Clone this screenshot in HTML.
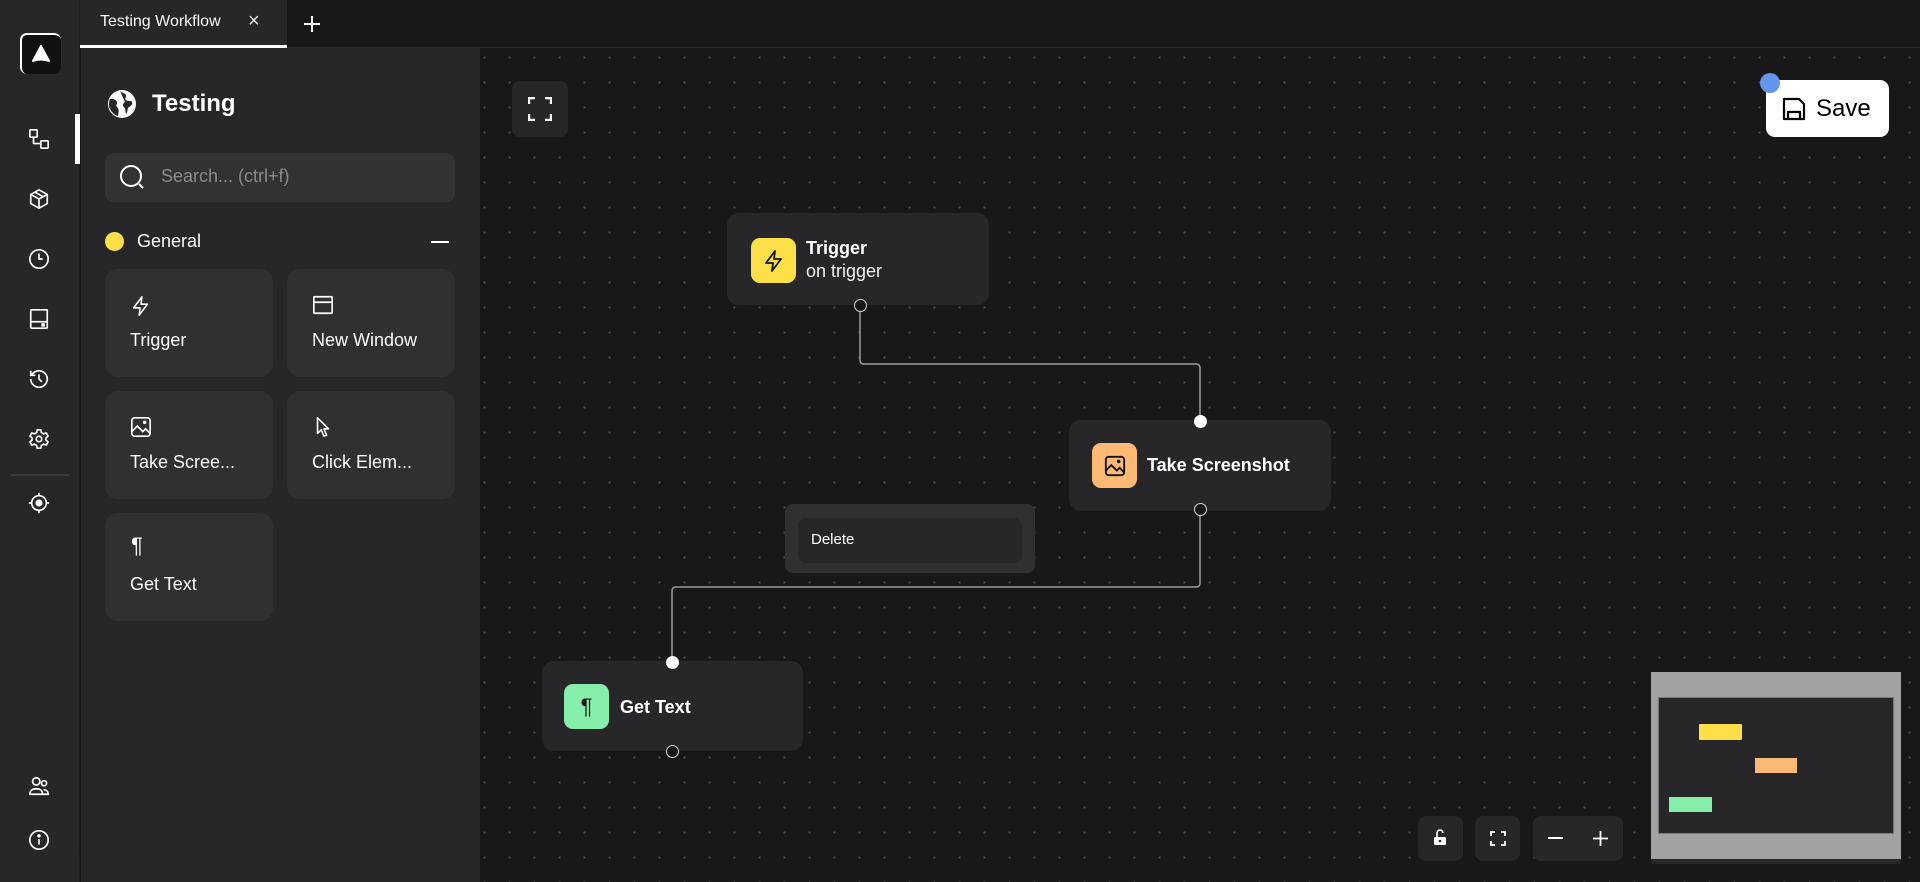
<!DOCTYPE html>
<html><head><meta charset="utf-8"><style>
*{margin:0;padding:0;box-sizing:border-box}
body{width:1920px;height:882px;overflow:hidden;background:#18181b;font-family:"Liberation Sans",sans-serif;color:#fff;position:relative}
.abs{position:absolute}
#canvas{left:480px;top:48px;width:1440px;height:834px;background-color:#18181b;background-image:radial-gradient(circle,#4a4a50 1px,transparent 1.3px);background-size:25px 25px;background-position:-8px -3px}
#iconbar{left:0;top:0;width:80px;height:882px;background:#27272a;border-right:1px solid #1f1f22}
#panel{left:81px;top:48px;width:399px;height:834px;background:#27272a}
.ic{position:absolute;left:28px;width:22px;height:22px}
.card{position:absolute;width:168px;height:108px;background:#303033;border-radius:13px}
.card .t{position:absolute;left:25px;font-size:18px;color:#fafafa}
.card svg{position:absolute;left:25px}
.node{position:absolute;background:#27272a;border-radius:12px}
.nic{position:absolute;width:45px;height:45px;border-radius:9px;display:flex;align-items:center;justify-content:center}
.h{position:absolute;width:13px;height:13px;border-radius:50%;margin:-6.5px 0 0 -6.5px}
.hw{background:#fff}
.hd{background:#18181b;border:1.5px solid #d4d4d8}
.btn{position:absolute;background:#27272a;border-radius:8px}
</style></head><body>
<div class="abs" id="canvas"></div>
<div class="abs" style="left:80px;top:0;width:1840px;height:48px;background:#18181b;border-bottom:1px solid #2c2c30"></div>
<div class="abs" style="left:80px;top:0;width:207px;height:48px;background:#27272a"></div>
<div class="abs" style="left:80px;top:45px;width:207px;height:3px;background:#fff"></div>
<div class="abs" style="left:100px;top:13px;font-size:16px;color:#fafafa">Testing Workflow</div>
<div class="abs" style="left:248px;top:10px;font-size:20px;color:#e4e4e7">×</div>
<svg class="abs" style="left:303px;top:15px" width="18" height="18" viewBox="0 0 18 18"><path d="M9 1v16M1 9h16" stroke="#fff" stroke-width="2"/></svg>

<div class="abs" id="iconbar"></div>
<div class="abs" style="left:79px;top:48px;width:1px;height:805px;background:#1c1c1f"></div>
<div class="abs" style="left:20px;top:33px;width:41px;height:41px;background:#111113;border-radius:7px;border-top:2px solid #fff;border-left:2px solid #fff"></div>
<svg class="abs" style="left:31px;top:44px" width="20" height="20" viewBox="0 0 20 20"><path d="M10 2 L18 17 Q10 14 2 17 Z" fill="#fff" stroke="#fff" stroke-linejoin="round" stroke-width="2"/></svg>
<div class="abs" style="left:75px;top:114px;width:5px;height:50px;background:#fff"></div>
<svg class="ic" style="top:128px" viewBox="0 0 24 24" fill="none" stroke="#fff" stroke-width="1.8"><rect x="2" y="2" width="8" height="8" rx="1"/><rect x="14" y="14" width="8" height="8" rx="1"/><path d="M6 10v6a1 1 0 0 0 1 1h7"/></svg>
<svg class="ic" style="top:188px" viewBox="0 0 24 24" fill="none" stroke="#fff" stroke-width="1.8" stroke-linejoin="round"><path d="M12 2 21 7v10l-9 5-9-5V7z"/><path d="M3 7l9 5 9-5M12 12v10M7.5 4.5l9 5"/></svg>
<svg class="ic" style="top:248px" viewBox="0 0 24 24" fill="none" stroke="#fff" stroke-width="1.8"><circle cx="12" cy="12" r="10"/><path d="M12 6v6h4"/></svg>
<svg class="ic" style="top:308px" viewBox="0 0 24 24" fill="none" stroke="#fff" stroke-width="1.8"><rect x="3" y="2" width="18" height="20" rx="1"/><path d="M3 15h18"/><rect x="15.5" y="17.5" width="2" height="2" fill="#fff"/></svg>
<svg class="ic" style="top:368px" viewBox="0 0 24 24" fill="none" stroke="#fff" stroke-width="1.8"><path d="M3 12a9 9 0 1 0 3-6.7L3 8M3 3v5h5"/><path d="M12 7v5l3 3"/></svg>
<svg class="ic" style="top:428px" viewBox="0 0 24 24" fill="none" stroke="#fff" stroke-width="1.8" stroke-linejoin="round"><path d="M10 2h4l.6 3 2.4 1.4 2.9-1 2 3.4-2.3 2v2.4l2.3 2-2 3.4-2.9-1L14.6 19 14 22h-4l-.6-3L7 17.6l-2.9 1-2-3.4 2.3-2v-2.4l-2.3-2 2-3.4 2.9 1L9.4 5z"/><circle cx="12" cy="12" r="3"/></svg>
<div class="abs" style="left:11px;top:474px;width:58px;height:2px;background:#3a3a3e"></div>
<svg class="ic" style="top:492px" viewBox="0 0 24 24" fill="none" stroke="#fff" stroke-width="1.8"><circle cx="12" cy="12" r="8"/><circle cx="12" cy="12" r="3" fill="#fff"/><path d="M12 1v3M12 20v3M1 12h3M20 12h3"/></svg>
<svg class="ic" style="top:775px" viewBox="0 0 24 24" fill="none" stroke="#fff" stroke-width="1.8"><circle cx="9" cy="7" r="4"/><path d="M2 21c0-4 3-6 7-6s7 2 7 6z"/><circle cx="17.5" cy="9" r="2.8"/><path d="M16 21h6c0-3-2-5-5-5"/></svg>
<svg class="ic" style="top:829px" viewBox="0 0 24 24" fill="none" stroke="#fff" stroke-width="1.8"><circle cx="12" cy="12" r="10"/><path d="M12 11v6"/><circle cx="12" cy="7.5" r="1" fill="#fff"/></svg>

<div class="abs" id="panel"></div>
<svg class="abs" style="left:107px;top:89px" width="30" height="30" viewBox="0 0 30 30"><circle cx="15" cy="15" r="14" fill="#fff"/><path d="M3 10c3-1 6 1 7 3s-2 3 0 5 2 4 1 9c-4-1-8-5-9-10 0-2 0-5 1-7z" fill="#27272a"/><path d="M13 2c2 2 5 2 6 4s-2 3 0 5 5 0 6 2-1 4-3 5-1 5-3 7c-1-3 0-5-2-7-2-1-1-4 1-5" fill="#27272a"/></svg>
<div class="abs" style="left:152px;top:90px;font-size:24px;font-weight:bold">Testing</div>
<div class="abs" style="left:105px;top:153px;width:350px;height:49px;background:#323235;border-radius:9px"></div>
<svg class="abs" style="left:119px;top:164px" width="28" height="28" viewBox="0 0 28 28" fill="none" stroke="#fff" stroke-width="2"><circle cx="12" cy="12" r="10"/><path d="M20 20l4 4"/></svg>
<div class="abs" style="left:161px;top:166px;font-size:18px;color:#8a8a90">Search... (ctrl+f)</div>
<div class="abs" style="left:105px;top:232px;width:19px;height:19px;border-radius:50%;background:#fde047"></div>
<div class="abs" style="left:137px;top:231px;font-size:18px;color:#fafafa">General</div>
<div class="abs" style="left:431px;top:241px;width:18px;height:2px;background:#fff"></div>

<div class="card" style="left:105px;top:269px"><svg style="top:25px" width="22" height="24" viewBox="0 0 24 24" fill="none" stroke="#fff" stroke-width="1.7" stroke-linejoin="round"><path d="M13 2 4 14h7l-1 8 9-12h-7z"/></svg><div class="t" style="top:61px">Trigger</div></div>
<div class="card" style="left:287px;top:269px"><svg style="top:25px" width="22" height="22" viewBox="0 0 24 24" fill="none" stroke="#fff" stroke-width="1.8"><rect x="2" y="3" width="20" height="18" rx="1"/><path d="M2 9h20"/></svg><div class="t" style="top:61px">New Window</div></div>
<div class="card" style="left:105px;top:391px"><svg style="top:25px" width="22" height="22" viewBox="0 0 24 24" fill="none" stroke="#fff" stroke-width="1.8"><rect x="2" y="2" width="20" height="20" rx="3"/><path d="M2 17l6-6 6 6 3-3 5 5"/><circle cx="16" cy="7" r="1" fill="#fff"/></svg><div class="t" style="top:61px">Take Scree...</div></div>
<div class="card" style="left:287px;top:391px"><svg style="top:25px" width="22" height="22" viewBox="0 0 24 24" fill="none" stroke="#fff" stroke-width="1.7" stroke-linejoin="round"><path d="M6 2v17l4-4 3 7 3-1-3-7h5z"/></svg><div class="t" style="top:61px">Click Elem...</div></div>
<div class="card" style="left:105px;top:513px"><div style="position:absolute;left:26px;top:20px;font-size:22px">¶</div><div class="t" style="top:61px">Get Text</div></div>

<div class="btn" style="left:512px;top:81px;width:56px;height:56px"></div>
<svg class="abs" style="left:528px;top:97px" width="24" height="24" viewBox="0 0 24 24" fill="none" stroke="#fff" stroke-width="2.4"><path d="M1 7V1h6M17 1h6v6M23 17v6h-6M7 23H1v-6"/></svg>

<div class="abs" style="left:1766px;top:80px;width:123px;height:57px;background:#fff;border-radius:9px"></div>
<svg class="abs" style="left:1782px;top:97px" width="24" height="24" viewBox="0 0 24 24" fill="none" stroke="#000" stroke-width="2.2" stroke-linejoin="round"><path d="M2 2h15l5 5v15H2z"/><path d="M6 22v-7h12v7"/></svg>
<div class="abs" style="left:1816px;top:95px;font-size:24px;color:#000">Save</div>
<div class="abs" style="left:1760px;top:73px;width:20px;height:20px;border-radius:50%;background:#6495ed"></div>

<svg class="abs" style="left:0;top:0" width="1920" height="882"><g fill="none" stroke="#9a9aa0" stroke-width="1.5"><path d="M860 305V360q0 4 4 4H1196q4 0 4 4V421"/><path d="M1200 509V583q0 4-4 4H676q-4 0-4 4V662"/></g></svg>

<div class="node" style="left:727px;top:213px;width:262px;height:92px"></div>
<div class="nic" style="left:751px;top:238px;background:#fde047"><svg width="24" height="26" viewBox="0 0 24 24" fill="none" stroke="#111" stroke-width="1.8" stroke-linejoin="round"><path d="M13 2 4 14h7l-1 8 9-12h-7z"/></svg></div>
<div class="abs" style="left:806px;top:238px;font-size:18px;font-weight:bold">Trigger</div>
<div class="abs" style="left:806px;top:261px;font-size:18px;color:#f0f0f0">on trigger</div>
<div class="h hd" style="left:860px;top:305px"></div>

<div class="node" style="left:1069px;top:420px;width:262px;height:91px"></div>
<div class="nic" style="left:1092px;top:443px;background:#fdba74"><svg width="22" height="22" viewBox="0 0 24 24" fill="none" stroke="#111" stroke-width="2"><rect x="2" y="2" width="20" height="20" rx="3"/><path d="M2 17l6-6 6 6 3-3 5 5"/><circle cx="16" cy="7" r="1" fill="#111"/></svg></div>
<div class="abs" style="left:1147px;top:455px;font-size:18px;font-weight:bold">Take Screenshot</div>
<div class="h hw" style="left:1200px;top:421px"></div>
<div class="h hd" style="left:1200px;top:509px"></div>

<div class="abs" style="left:785px;top:504px;width:250px;height:69px;background:#303033;border-radius:8px"></div>
<div class="abs" style="left:798px;top:518px;width:224px;height:45px;background:#27272a;border-radius:8px"></div>
<div class="abs" style="left:811px;top:531px;font-size:15px">Delete</div>

<div class="node" style="left:542px;top:661px;width:261px;height:90px"></div>
<div class="nic" style="left:564px;top:684px;background:#86efac;color:#111;font-size:22px">¶</div>
<div class="abs" style="left:620px;top:697px;font-size:18px;font-weight:bold">Get Text</div>
<div class="h hw" style="left:672px;top:662px"></div>
<div class="h hd" style="left:672px;top:751px"></div>

<div class="btn" style="left:1418px;top:816px;width:45px;height:45px"></div>
<svg class="abs" style="left:1432px;top:829px" width="16" height="18" viewBox="0 0 16 18"><path d="M5 8V4a3 3 0 0 1 6 0" fill="none" stroke="#fff" stroke-width="1.6"/><rect x="2" y="8" width="12" height="8" rx="1.5" fill="#fff"/><circle cx="8" cy="12" r="1.3" fill="#27272a"/></svg>
<div class="btn" style="left:1475px;top:816px;width:45px;height:45px"></div>
<svg class="abs" style="left:1490px;top:831px" width="16" height="15" viewBox="0 0 16 15" fill="none" stroke="#fff" stroke-width="1.8"><path d="M1 5V1h4M11 1h4v4M15 10v4h-4M5 14H1v-4"/></svg>
<div class="btn" style="left:1533px;top:816px;width:90px;height:45px"></div>
<div class="abs" style="left:1548px;top:837px;width:15px;height:2px;background:#fff"></div>
<svg class="abs" style="left:1593px;top:831px" width="15" height="15" viewBox="0 0 15 15"><path d="M7.5 0v15M0 7.5h15" stroke="#fff" stroke-width="1.8"/></svg>

<div class="abs" style="left:1651px;top:672px;width:250px;height:187px;background:#a1a1a1"></div>
<div class="abs" style="left:1651px;top:859px;width:250px;height:5px;background:#27272a"></div>
<div class="abs" style="left:1658px;top:697px;width:236px;height:137px;background:#27272a;border:1px solid #777"></div>
<div class="abs" style="left:1699px;top:724px;width:43px;height:16px;background:#fde047;border-radius:1px"></div>
<div class="abs" style="left:1755px;top:758px;width:42px;height:15px;background:#fdba74"></div>
<div class="abs" style="left:1669px;top:797px;width:43px;height:15px;background:#86efac"></div>
</body></html>
